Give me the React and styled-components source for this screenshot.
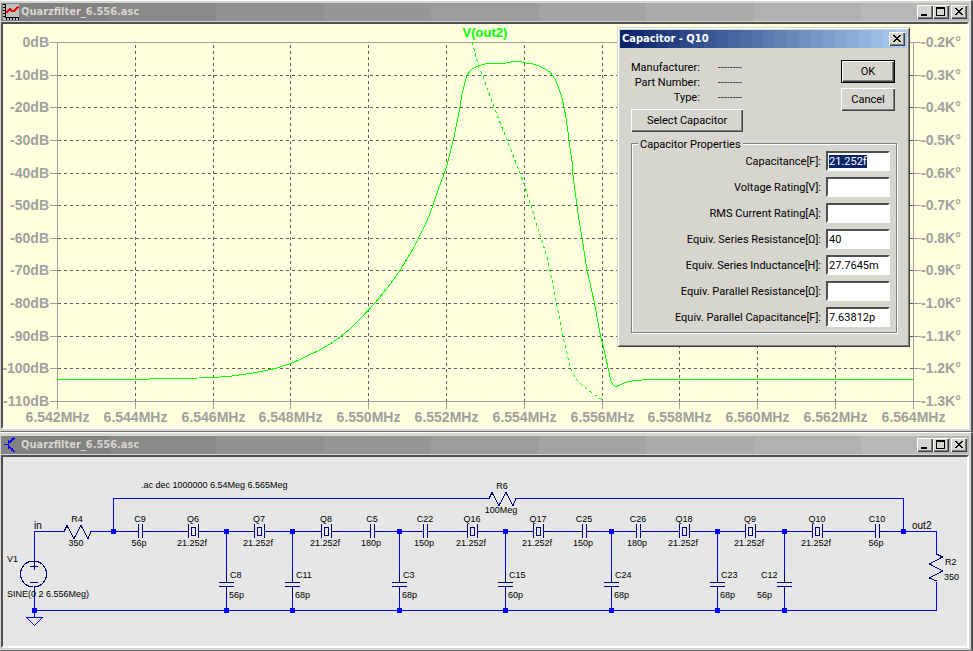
import React, { useEffect, useRef } from 'react';
import styled, { createGlobalStyle } from 'styled-components';

const FACE = '#d6d5ce';
const WIRE = '#0000ff';
const PART = '#000080';
const SHEET = '#e6e6e6';

const raised = `
  box-shadow:
    inset 1px 1px 0 #fff,
    inset -1px -1px 0 #404040,
    inset -2px -2px 0 #808080;
`;

// Stepped gradient, as drawn by a palette-limited title bar
const bands = (from, to, count) => {
  const stops = [];
  for (let i = 0; i < count; i += 1) {
    const rgb = from.map((c, k) => Math.round(c + ((to[k] - c) * i) / (count - 1)));
    stops.push(`rgb(${rgb.join(',')}) ${(i * 100) / count}% ${((i + 1) * 100) / count}%`);
  }
  return `linear-gradient(to right, ${stops.join(', ')})`;
};

const GlobalStyle = createGlobalStyle`
  *, *::before, *::after {
    box-sizing: border-box;
  }

  body {
    margin: 0;
    background: ${FACE};
    color: #000;
    font-family: 'Liberation Sans', Arial, sans-serif;
    font-size: 11px;
  }
`;

const Desktop = styled.main`
  position: relative;
  display: flex;
  flex-direction: column;
`;

const WindowFrame = styled.section`
  background: ${FACE};
  border-style: solid;
  border-width: 1px 2px 1px 1px;
  border-color: #fff #505050 #707070 ${FACE};
  padding: ${({ $top }) => $top}px 2px 2px 0;
`;

const TitleBar = styled.header`
  display: flex;
  align-items: center;
  gap: 2px;
  height: 18px;
  padding: 0 2px;
  background: ${({ $active }) =>
    $active ? bands([10, 36, 106], [166, 202, 240], 24) : bands([130, 130, 130], [184, 184, 184], 9)};
  color: ${({ $active }) => ($active ? '#fff' : FACE)};
`;

const Title = styled.h2`
  flex: 1;
  margin: 0;
  font: bold 11px/18px 'DejaVu Sans Condensed', 'DejaVu Sans', sans-serif;
  white-space: nowrap;
`;

const TitleIcon = styled.svg`
  display: block;
  width: 16px;
  height: 16px;
`;

const ButtonPair = styled.div`
  display: flex;
`;

const CaptionButton = styled.button`
  width: 16px;
  height: 14px;
  padding: 0;
  border: none;
  background: ${FACE};
  ${raised}

  svg {
    display: block;
  }
`;

const Canvas = styled.div`
  margin-top: 1px;
  border-style: solid;
  border-width: 2px;
  border-color: #505050 #fff #fff #505050;
  background: ${({ $color }) => $color};
`;

const Drawing = styled.svg`
  display: block;
  width: 100%;
  height: auto;
`;

const AxisLabel = styled.text`
  font: bold 14px 'Liberation Sans', Arial, sans-serif;
  fill: #a0a0a0;
`;

const TraceLabel = styled.text`
  font: bold 13px 'Liberation Sans', Arial, sans-serif;
  fill: #00ff00;
`;

const PartLabel = styled.text`
  font: 9px 'Liberation Sans', Arial, sans-serif;
  fill: #000;
`;

const NetLabel = styled.text`
  font: 10px 'Liberation Sans', Arial, sans-serif;
  fill: #000;
`;

const Dialog = styled.form`
  position: absolute;
  top: 27px;
  right: 63px;
  width: 293px;
  padding: 3px;
  background: ${FACE};
  box-shadow:
    inset 1px 1px 0 ${FACE},
    inset -1px -1px 0 #404040,
    inset 2px 2px 0 #fff,
    inset -2px -2px 0 #808080;
  font: 11px/15px Roboto, 'Liberation Sans', sans-serif;
`;

const DialogBody = styled.div`
  padding: 12px 10px 11px 11px;
`;

const DialogTop = styled.div`
  display: flex;
  justify-content: space-between;
  margin-bottom: 4px;
`;

const PartInfo = styled.dl`
  display: grid;
  grid-template-columns: max-content max-content;
  column-gap: 18px;
  margin: 0 0 4px;

  dt {
    text-align: right;
  }

  dd {
    margin: 0;
    font: 9px/15px 'Liberation Sans', sans-serif;
  }
`;

const ButtonColumn = styled.div`
  display: flex;
  flex-direction: column;
  gap: 5px;
  margin-right: 2px;
`;

const PushButton = styled.button`
  min-width: 54px;
  height: 23px;
  padding: 0 16px;
  border: none;
  background: ${FACE};
  font: inherit;
  color: #000;
  ${raised}
  ${({ $primary }) =>
    $primary &&
    `
    border: 1px solid #000;
  `}
  ${({ $compact }) => $compact && 'padding: 0;'}
`;

const Properties = styled.fieldset`
  min-width: 0;
  margin: 0;
  padding: 0 6px 5px;
  border: 1px solid #808080;
  box-shadow:
    1px 1px 0 #fff,
    inset 1px 1px 0 #fff;

  legend {
    padding: 3px 2px 0;
    background: ${FACE};
    line-height: 12px;
  }
`;

const FieldGrid = styled.div`
  display: grid;
  grid-template-columns: 1fr 64px;
  align-items: center;
  gap: 6px 5px;
  text-align: right;
`;

const Field = styled.input`
  width: 100%;
  height: 20px;
  padding: 0 1px;
  border-style: solid;
  border-width: 2px;
  border-color: #505050 #fff #fff #505050;
  border-radius: 0;
  outline: none;
  background: #fff;
  font: inherit;
  color: #000;

  &::selection {
    background: #0a246a;
    color: #fff;
  }
`;

const gridX = Array.from({ length: 12 }, (_, i) => Math.round(57 + i * 77.8) + 0.5);
const gridY = Array.from({ length: 12 }, (_, i) => Math.round(42 + i * 32.64) + 0.5);

const gainTrace = `57,379.5 148,379.5 150,378.5 199,378 213,377.5 220,377 232,376 243,374.5 250,373.5
  258,372 268,370 277,368 291,363.5 300,359.5 310,354.5 320,350 330,344 340,337 350,329 360,319
  369,309.5 378,299.5 387,288 394,279 400,270.5 407,259 414,247 421,233 427,221 433,205 438,190
  444,174 447,165 450,153 454,137 457,122 460,107 462,94 465,82 468,73.5 472,69 478,66 483,64.5
  489,63 502,63 504,63.5 508,62.5 513,61.5 520,61.5 526,63 533,64 539,66 545,69 550,72 553,76
  556,81 559,89 562,98 564,107 566,118 568,132 570,148 572,161 573,175 575,191 577,205 579,220
  582,238 587,270 594.5,303 600.5,336 603,345 608,368 611,381 613,385 616,386.5 619,385.5 625,382.5
  632,381 640,380.5 645,379.5 913,379.5`;

const phaseTrace = `472,42 477,60 479,68 483,76 487,88 494,107 499,120 507,140 514,158 520,173 524,184
  528,197 532,208 535,220 542,241 547,257 550,271 553,285 556,301 559,316 562,330 564,341 567,353
  570,367 574,375 577,380 581,384 586,388 592,393 597,396 602,400`;

const Chart = () => (
  <Drawing viewBox="3 24 964 403" role="img" aria-label="Frequency response of V(out2)">
    <g stroke="#606060" strokeDasharray="3 3" shapeRendering="crispEdges">
      {gridX.slice(1, -1).map((x) => (
        <line key={x} x1={x} x2={x} y1="45" y2="401" />
      ))}
      {gridY.slice(1, -1).map((y) => (
        <line key={y} x1="58" x2="913" y1={y} y2={y} />
      ))}
    </g>
    <g stroke="#a0a0a0" fill="none" shapeRendering="crispEdges">
      <rect x="57.5" y="42.5" width="856" height="359" />
      {gridX.map((x) => (
        <line key={x} x1={x} x2={x} y1="401" y2="409" />
      ))}
      {gridY.map((y) => (
        <path key={y} d={`M50 ${y}H57M913 ${y}H921`} />
      ))}
    </g>
    {gridY.map((y, i) => (
      <React.Fragment key={y}>
        <AxisLabel x="49" y={Math.floor(y) + 5} textAnchor="end">
          {i === 0 ? '0dB' : `-${i * 10}dB`}
        </AxisLabel>
        <AxisLabel x="921" y={Math.floor(y) + 5}>{`-${(0.2 + i * 0.1).toFixed(1)}K°`}</AxisLabel>
      </React.Fragment>
    ))}
    {gridX.map((x, i) => (
      <AxisLabel key={x} x={x} y="422" textAnchor="middle">
        {`${(6.542 + i * 0.002).toFixed(3)}MHz`}
      </AxisLabel>
    ))}
    <TraceLabel x="485" y="37" textAnchor="middle">V(out2)</TraceLabel>
    <g stroke="#00ff00" fill="none" shapeRendering="crispEdges">
      <polyline points={gainTrace} />
      <polyline points={phaseTrace} strokeDasharray="3 3" />
    </g>
  </Drawing>
);

const seriesParts = [
  { type: 'C', name: 'C9', value: '56p', x: 140 },
  { type: 'Q', name: 'Q6', value: '21.252f', x: 193 },
  { type: 'Q', name: 'Q7', value: '21.252f', x: 259 },
  { type: 'Q', name: 'Q8', value: '21.252f', x: 326 },
  { type: 'C', name: 'C5', value: '180p', x: 372 },
  { type: 'C', name: 'C22', value: '150p', x: 425 },
  { type: 'Q', name: 'Q16', value: '21.252f', x: 472 },
  { type: 'Q', name: 'Q17', value: '21.252f', x: 538 },
  { type: 'C', name: 'C25', value: '150p', x: 584 },
  { type: 'C', name: 'C26', value: '180p', x: 638 },
  { type: 'Q', name: 'Q18', value: '21.252f', x: 684 },
  { type: 'Q', name: 'Q9', value: '21.252f', x: 750 },
  { type: 'Q', name: 'Q10', value: '21.252f', x: 817 },
  { type: 'C', name: 'C10', value: '56p', x: 877 },
];

const shuntParts = [
  { name: 'C8', value: '56p', x: 226 },
  { name: 'C11', value: '68p', x: 292 },
  { name: 'C3', value: '68p', x: 399 },
  { name: 'C15', value: '60p', x: 505 },
  { name: 'C24', value: '68p', x: 611 },
  { name: 'C23', value: '68p', x: 717 },
  { name: 'C12', value: '56p', x: 784, left: true },
];

const junctions = [
  [113, 531],
  [903, 531],
  [34, 610],
  ...shuntParts.flatMap(({ x }) => [[x, 531], [x, 610]]),
];

const SeriesPart = ({ type, name, value, x }) => {
  const half = type === 'Q' ? 5 : 2;
  return (
    <g>
      <g transform={`translate(${x} 531)`} shapeRendering="crispEdges">
        <rect x={-half} y="-7" width={half * 2 + 1} height="14" fill={SHEET} />
        <g stroke={PART} fill="none">
          <path d={`M${-half - 8} 0.5H${-half}M${half + 1} 0.5H${half + 9}`} />
          <path d={`M${0.5 - half} -7V7M${half + 0.5} -7V7`} />
          {type === 'Q' && <rect x="-1.5" y="-3.5" width="4" height="8" />}
        </g>
      </g>
      <PartLabel x={x} y="522" textAnchor="middle">{name}</PartLabel>
      <PartLabel x={x - 1} y="546" textAnchor="middle">{value}</PartLabel>
    </g>
  );
};

const ShuntPart = ({ name, value, x, left }) => (
  <g>
    <g transform={`translate(${x} 582)`} shapeRendering="crispEdges">
      <rect x="-1" y="0" width="3" height="4" fill={SHEET} />
      <path d="M0.5 -10V0M0.5 5V15M-7 0.5H8M-7 4.5H8" stroke={PART} />
    </g>
    <PartLabel x={left ? x - 23 : x + 4} y="578">{name}</PartLabel>
    <PartLabel x={left ? x - 27 : x + 3} y="598">{value}</PartLabel>
  </g>
);

const zigzag = 'M0 0L3 -6L10 7L17 -6L24 7L27 0';

const Schematic = () => (
  <Drawing viewBox="3 457 964 189" role="img" aria-label="Crystal ladder filter schematic">
    <g stroke={WIRE} fill="none" shapeRendering="crispEdges">
      <path d="M34.5 560V531.5H64M91 531.5H936.5V554M936.5 582V610.5H34.5M34.5 587V617" />
      <path d="M113.5 531V498.5H489M516 498.5H903.5V531" />
      <path d="M26.5 617.5H42.5L34.5 625.5Z" />
      {shuntParts.map(({ x }) => (
        <line key={x} x1={x + 0.5} x2={x + 0.5} y1="531" y2="610" />
      ))}
    </g>
    <g stroke={PART} fill="none" shapeRendering="crispEdges">
      <path d={zigzag} transform="translate(64 531.5)" />
      <path d={zigzag} transform="translate(489 498.5)" />
      <path d={zigzag} transform="translate(936.5 554) rotate(90)" />
      <circle cx="33.5" cy="574" r="13" />
      <path d="M34.5 558V570M30 566.5H38M30 582.5H38M34.5 587V597" />
    </g>
    {seriesParts.map((part) => (
      <SeriesPart key={part.name} {...part} />
    ))}
    {shuntParts.map((part) => (
      <ShuntPart key={part.name} {...part} />
    ))}
    <g fill={WIRE}>
      {junctions.map(([x, y]) => (
        <rect key={`${x}-${y}`} x={x - 2} y={y - 2} width="5" height="5" />
      ))}
    </g>
    <PartLabel x="77" y="522" textAnchor="middle">R4</PartLabel>
    <PartLabel x="76" y="546" textAnchor="middle">350</PartLabel>
    <PartLabel x="502" y="489" textAnchor="middle">R6</PartLabel>
    <PartLabel x="501" y="513" textAnchor="middle">100Meg</PartLabel>
    <PartLabel x="945" y="565">R2</PartLabel>
    <PartLabel x="944" y="580">350</PartLabel>
    <PartLabel x="7" y="562">V1</PartLabel>
    <PartLabel x="7" y="597">SINE(0 2 6.556Meg)</PartLabel>
    <PartLabel x="141" y="488">.ac dec 1000000 6.54Meg 6.565Meg</PartLabel>
    <NetLabel x="34" y="529">in</NetLabel>
    <NetLabel x="912" y="529">out2</NetLabel>
  </Drawing>
);

const PlotIcon = () => (
  <TitleIcon viewBox="0 0 16 16" shapeRendering="crispEdges" aria-hidden="true">
    <rect width="16" height="16" fill="#c0c0c0" />
    <path d="M2.5 0V14M2 13.5H16" stroke="#000" />
    <path d="M0 0.5H2M0 3.5H2M0 6.5H2M0 9.5H2M0 12.5H2" stroke="#000" />
    <path d="M3.5 14V16M6.5 14V16M9.5 14V16M12.5 14V16M15.5 14V16" stroke="#000" />
    <path d="M3 9L7 5L9 7H11L15 3" stroke="#f00" strokeWidth="1.5" fill="none" />
  </TitleIcon>
);

const TransistorIcon = () => (
  <TitleIcon viewBox="0 0 16 16" shapeRendering="crispEdges" aria-hidden="true">
    <path d="M1 7.5H5M5.5 3V12M6 6L11 1M6 9L11 15" stroke="#00f" strokeWidth="1.5" fill="none" />
    <path d="M11 15L7 13L10 10Z" fill="#00f" />
  </TitleIcon>
);

const CloseButton = () => (
  <CaptionButton type="button" aria-label="Close">
    <svg width="16" height="14" viewBox="0 0 16 14" shapeRendering="crispEdges">
      <path d="M4 3h2v1h1v1h2V4h1V3h2v1h-1v1h-1v1H9v1h1v1h1v1h1v1h-2V9H9V8H7v1H6v1H4V9h1V8h1V7h1V6H6V5H5V4H4z" />
    </svg>
  </CaptionButton>
);

const Window = ({ title, icon, top, color, children }) => (
  <WindowFrame $top={top}>
    <TitleBar>
      {icon}
      <Title>{title}</Title>
      <ButtonPair>
        <CaptionButton type="button" aria-label="Minimize">
          <svg width="16" height="14" viewBox="0 0 16 14" shapeRendering="crispEdges">
            <path d="M4 9h6v2H4z" />
          </svg>
        </CaptionButton>
        <CaptionButton type="button" aria-label="Maximize">
          <svg width="16" height="14" viewBox="0 0 16 14" shapeRendering="crispEdges">
            <path d="M3 2h9v9H3zM4 4v6h7V4z" fillRule="evenodd" />
          </svg>
        </CaptionButton>
      </ButtonPair>
      <CloseButton />
    </TitleBar>
    <Canvas $color={color}>{children}</Canvas>
  </WindowFrame>
);

const info = ['Manufacturer:', 'Part Number:', 'Type:'];

const fields = [
  { id: 'capacitance', label: 'Capacitance[F]:', value: '21.252f' },
  { id: 'voltage', label: 'Voltage Rating[V]:', value: '' },
  { id: 'current', label: 'RMS Current Rating[A]:', value: '' },
  { id: 'esr', label: 'Equiv. Series Resistance[Ω]:', value: '40' },
  { id: 'esl', label: 'Equiv. Series Inductance[H]:', value: '27.7645m' },
  { id: 'epr', label: 'Equiv. Parallel Resistance[Ω]:', value: '' },
  { id: 'epc', label: 'Equiv. Parallel Capacitance[F]:', value: '7.63812p' },
];

const CapacitorDialog = () => {
  const firstField = useRef(null);

  useEffect(() => {
    firstField.current.focus();
    firstField.current.select();
  }, []);

  return (
    <Dialog role="dialog" aria-labelledby="dialog-title" onSubmit={(e) => e.preventDefault()}>
      <TitleBar $active>
        <Title id="dialog-title">Capacitor - Q10</Title>
        <CloseButton />
      </TitleBar>
      <DialogBody>
        <DialogTop>
          <div>
            <PartInfo>
              {info.map((label) => (
                <React.Fragment key={label}>
                  <dt>{label}</dt>
                  <dd>--------</dd>
                </React.Fragment>
              ))}
            </PartInfo>
            <PushButton type="button">Select Capacitor</PushButton>
          </div>
          <ButtonColumn>
            <PushButton type="submit" $primary $compact>OK</PushButton>
            <PushButton type="button" $compact>Cancel</PushButton>
          </ButtonColumn>
        </DialogTop>
        <Properties>
          <legend>Capacitor Properties</legend>
          <FieldGrid>
            {fields.map(({ id, label, value }, i) => (
              <React.Fragment key={id}>
                <label htmlFor={id}>{label}</label>
                <Field id={id} type="text" defaultValue={value} ref={i === 0 ? firstField : null} />
              </React.Fragment>
            ))}
          </FieldGrid>
        </Properties>
      </DialogBody>
    </Dialog>
  );
};

const App = () => (
  <>
    <GlobalStyle />
    <Desktop>
      <Window title="Quarzfilter_6.556.asc" icon={<PlotIcon />} top={2} color="#ffffdd">
        <Chart />
      </Window>
      <Window title="Quarzfilter_6.556.asc" icon={<TransistorIcon />} top={3} color={SHEET}>
        <Schematic />
      </Window>
      <CapacitorDialog />
    </Desktop>
  </>
);

export default App;
